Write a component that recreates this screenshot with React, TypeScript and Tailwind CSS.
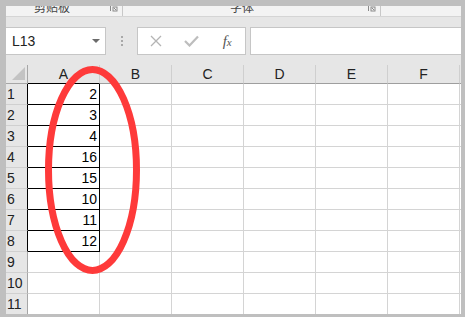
import React from 'react';

const cols = ['A', 'B', 'C', 'D', 'E', 'F'];
const values = [2, 3, 4, 16, 15, 10, 11, 12];
const rows = Array.from({ length: 11 }, (_, i) => i + 1);

const Launcher = () => (
    <svg width="8" height="6" viewBox="0 0 8 6" className="block">
        <path d="M0.5 0 V5" stroke="#8a8a8a" strokeWidth="1" />
        <rect x="3" y="1" width="4" height="4" fill="none" stroke="#8a8a8a" strokeWidth="1" />
        <path d="M4 2 L6 4" stroke="#8a8a8a" strokeWidth="1" />
    </svg>
);

const RibbonStrip = () => (
    <div className="flex h-[11px] items-start overflow-hidden border-b border-[#d5d5d5] bg-[#f3f3f3] text-[12px] leading-[12px] text-[#444] [font-family:'Noto_Sans_CJK_SC',sans-serif]">
        <div className="w-[104px] -mt-[5px] pl-[28px]">剪贴板</div>
        <div className="w-[12px] pt-0"><Launcher /></div>
        <div className="h-[10px] w-px bg-[#c8c8c8]" />
        <div className="w-[107px]" />
        <div className="w-[138px] -mt-[5px]">字体</div>
        <div className="w-[12px]"><Launcher /></div>
        <div className="h-[10px] w-px bg-[#c8c8c8]" />
    </div>
);

const FormulaRow = () => (
    <div className="flex h-[48px] items-start bg-[#e6e6e6] pt-[10px]">
        <div className="flex h-[28px] w-[100px] items-center justify-between border border-l-0 border-[#c6c6c6] bg-white pl-[6px] pr-[5px]">
            <span className="text-[14px] text-[#222] [font-family:'Liberation_Sans',sans-serif]">L13</span>
            <svg width="8" height="4" viewBox="0 0 8 4"><path d="M0 0 H8 L4 4 Z" fill="#6b6b6b" /></svg>
        </div>
        <div className="flex h-[28px] w-[31px] flex-col items-center justify-center gap-[2px]">
            <div className="h-[2px] w-[2px] bg-[#a8a8a8]" />
            <div className="h-[2px] w-[2px] bg-[#a8a8a8]" />
            <div className="h-[2px] w-[2px] bg-[#a8a8a8]" />
        </div>
        <div className="flex h-[28px] w-[109px] items-center border border-[#c6c6c6] bg-white">
            <div className="flex w-[36px] justify-center">
                <svg width="12" height="12" viewBox="0 0 12 12">
                    <path d="M1 1 L11 11 M11 1 L1 11" stroke="#b4b4b4" strokeWidth="1.3" />
                </svg>
            </div>
            <div className="flex w-[36px] justify-center">
                <svg width="15" height="12" viewBox="0 0 15 12">
                    <path d="M1 6 L5.5 10.5 L14 1.5" fill="none" stroke="#bdbdbd" strokeWidth="2.2" />
                </svg>
            </div>
            <div className="flex w-[36px] justify-center">
                <span className="italic text-[15px] leading-none text-[#555] [font-family:'Liberation_Serif',serif]">
                    f<span className="text-[11px]">x</span>
                </span>
            </div>
        </div>
        <div className="ml-[4px] h-[28px] flex-1 border border-r-0 border-[#c6c6c6] bg-white" />
    </div>
);

const HeaderRow = () => (
    <div className="flex h-[19px] bg-[#e6e6e6] text-[14px] text-[#222] [font-family:'Liberation_Sans',sans-serif]">
        <div className="relative h-full w-[22px] shrink-0 border-b border-r border-[#a6a6a6]">
            <svg width="14" height="14" viewBox="0 0 14 14" className="absolute right-[1px] bottom-[2px]">
                <path d="M13 0 V13 H0 Z" fill="#c3c3c3" />
            </svg>
        </div>
        {cols.map(c => (
            <div
                key={c}
                className={`flex h-full w-[72px] shrink-0 items-center justify-center border-b border-r border-r-[#cfcfcf] ${c === 'A' ? 'border-b-black' : 'border-b-[#9e9e9e]'}`}
            >
                {c}
            </div>
        ))}
        <div className="h-full w-[10px] shrink-0 border-b border-[#9e9e9e]" />
    </div>
);

const DataRow = ({ n }: { n: number }) => {
    const v = values[n - 1];
    const framed = n <= values.length;
    return (
        <div className="flex h-[21px] text-[14px] [font-family:'Liberation_Sans',sans-serif]">
            <div
                className={`flex h-full w-[22px] shrink-0 items-center border-b border-r border-b-[#d0d0d0] bg-[#e6e6e6] pl-[1px] text-[#222] ${framed ? 'border-r-black' : 'border-r-[#a6a6a6]'}`}
            >
                {n}
            </div>
            {cols.map(c => {
                const isA = c === 'A';
                const black = isA && framed;
                return (
                    <div
                        key={c}
                        className={`flex h-full w-[72px] shrink-0 items-center justify-end border-b border-r bg-white pr-[2px] text-black ${black ? 'border-black' : 'border-[#d4d4d4]'}`}
                    >
                        {isA && framed ? v : ''}
                    </div>
                );
            })}
            <div className="h-full w-[10px] shrink-0 border-b border-[#d4d4d4] bg-white" />
        </div>
    );
};

export default function App() {
    return (
        <div className="h-[317px] w-[465px] bg-[#bfbfbf] pb-[3px] pl-[6px] pr-[4px] pt-[6px]">
            <div className="relative h-[308px] w-[455px] overflow-hidden bg-[#e6e6e6]">
                <RibbonStrip />
                <FormulaRow />
                <HeaderRow />
                {rows.map(n => <DataRow key={n} n={n} />)}
                <svg className="pointer-events-none absolute inset-0" width="455" height="308" viewBox="0 0 455 308">
                    <ellipse cx="86.5" cy="164" rx="44" ry="100.5" fill="none" stroke="#fe3a3a" strokeWidth="7" />
                </svg>
            </div>
        </div>
    );
}
